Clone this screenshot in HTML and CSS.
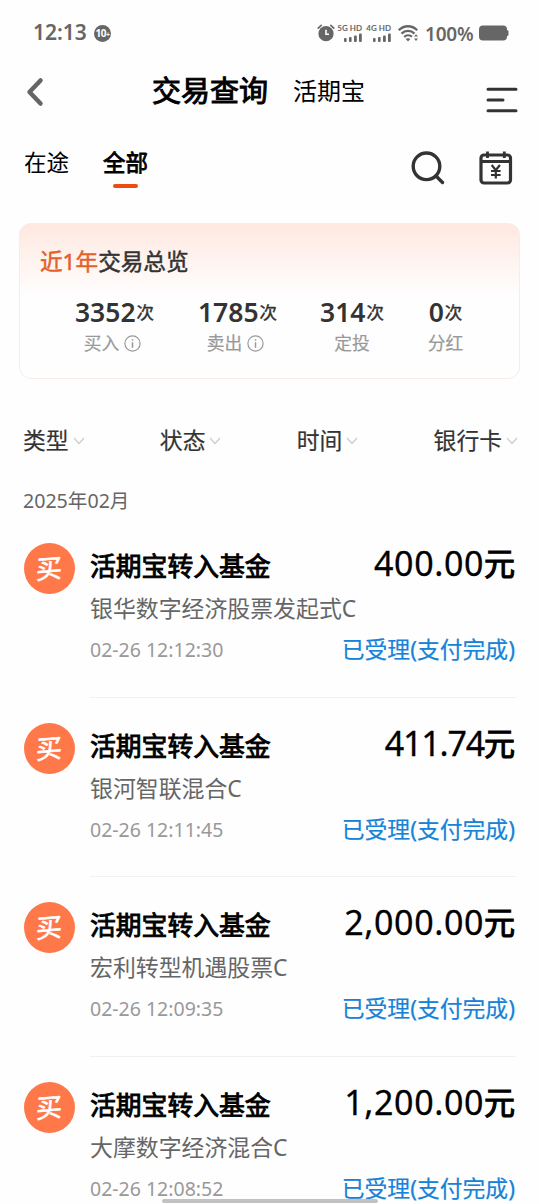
FILE: index.html
```html
<!DOCTYPE html>
<html lang="zh-CN">
<head>
    <meta charset="UTF-8">
    <meta name="viewport" content="width=device-width, initial-scale=1.0">
    <title>交易查询</title>
    <link rel="stylesheet" href="styles.css">
</head>
<body>
    <div class="status-bar">
        <span class="clock">12:13</span>
        <span class="badge">10<i>+</i></span>
        <div class="status-icons">
            <svg class="alarm" width="18" height="18" viewBox="0 0 18 18">
                <circle cx="9" cy="9.7" r="7.6" fill="#666"/>
                <path d="M1.2 4.2 4.2 1.4M16.8 4.2 13.8 1.4" stroke="#666" stroke-width="1.6" stroke-linecap="round"/>
                <path d="M9 5.8V10.2H12" fill="none" stroke="#fff" stroke-width="1.6"/>
            </svg>
            <div class="signal">
                <span>5G HD</span>
                <svg width="18" height="9" viewBox="0 0 18 9" fill="#666"><rect x="0" y="5" width="2.6" height="4" rx="1"/><rect x="5" y="4" width="2.6" height="5" rx="1"/><rect x="10" y="2.5" width="2.8" height="6.5" rx="1"/><rect x="15" y="0.5" width="2.8" height="8.5" rx="1"/></svg>
            </div>
            <div class="signal">
                <span>4G HD</span>
                <svg width="18" height="9" viewBox="0 0 18 9" fill="#666"><rect x="0" y="5" width="2.6" height="4" rx="1"/><rect x="5" y="4" width="2.6" height="5" rx="1"/><rect x="10" y="2.5" width="2.8" height="6.5" rx="1"/><rect x="15" y="0.5" width="2.8" height="8.5" rx="1"/></svg>
            </div>
            <svg class="wifi" width="21" height="17" viewBox="0 0 21 17" fill="none" stroke="#666" stroke-width="2.3">
                <path d="M.8 5.2C6-.1 14-.1 19.2 5.2M3.5 8.6C7.2 5 12.8 5 16.5 8.6M6.2 12C8.2 10 11.6 9.9 14 11.7"/>
                <path d="M7.5 13.8Q10 12.5 12.5 13.8L10 16.5Z" fill="#666" stroke="none"/>
                <path d="M16 11.6 18 9.3 20 11.6ZM16 13.5H20L18 15.9Z" fill="#666" stroke="none"/>
            </svg>
            <span class="percent">100%</span>
            <svg class="battery" width="30" height="16" viewBox="0 0 30 16" fill="#666"><rect x="0" y="0.5" width="28" height="15" rx="4"/><rect x="26" y="5" width="3.5" height="6" rx="1.5"/></svg>
        </div>
    </div>

    <div class="header">
        <svg class="back" width="20" height="30" viewBox="0 0 20 30"><path d="M16.5 3.5 5.5 15 16.5 26.5" fill="none" stroke="#666" stroke-width="4.5" stroke-linecap="round" stroke-linejoin="round"/></svg>
        <h1>交易查询</h1>
        <span class="sub-title">活期宝</span>
        <svg class="menu" width="32" height="26" viewBox="0 0 32 26"><path d="M2 2.3H30M2 13H17M2 23.7H30" stroke="#333" stroke-width="3" stroke-linecap="round"/></svg>
    </div>

    <div class="tabs">
        <span class="tab">在途</span>
        <span class="tab active">全部</span>
        <svg class="search" width="34" height="34" viewBox="0 0 34 34" fill="none" stroke="#333" stroke-width="3.4"><circle cx="15.5" cy="15.3" r="13.3"/><path d="M25 25 31.5 31.5" stroke-linecap="round"/></svg>
        <svg class="calendar" width="34" height="34" viewBox="0 0 34 34" fill="none" stroke="#333" stroke-width="3.2"><rect x="2" y="4" width="29.5" height="28" rx="3"/><path d="M2 10.5H31.5M8.5 .5V7M25.3 .5V7" stroke-width="2.8"/><path d="M12.7 14 16.8 19.2 20.9 14M12 20H21.6M12 24H21.6M16.8 19V27.5" stroke-width="2.2"/></svg>
    </div>

    <div class="overview">
        <h2><em>近1年</em>交易总览</h2>
        <div class="stats">
            <div class="stat">
                <div class="num">3352<small>次</small></div>
                <div class="label">买入<svg width="17" height="17" viewBox="0 0 17 17"><circle cx="8.5" cy="8.5" r="7.6" fill="none" stroke="#999" stroke-width="1.2"/><path d="M8.5 7.3V12.7M8.5 4.2V5.8" stroke="#999" stroke-width="1.5"/></svg></div>
            </div>
            <div class="stat">
                <div class="num">1785<small>次</small></div>
                <div class="label">卖出<svg width="17" height="17" viewBox="0 0 17 17"><circle cx="8.5" cy="8.5" r="7.6" fill="none" stroke="#999" stroke-width="1.2"/><path d="M8.5 7.3V12.7M8.5 4.2V5.8" stroke="#999" stroke-width="1.5"/></svg></div>
            </div>
            <div class="stat">
                <div class="num">314<small>次</small></div>
                <div class="label">定投</div>
            </div>
            <div class="stat">
                <div class="num">0<small>次</small></div>
                <div class="label">分红</div>
            </div>
        </div>
    </div>

    <div class="filters">
        <span>类型<svg width="12" height="8" viewBox="0 0 12 8"><path d="M1 1 6 6.5 11 1"/></svg></span>
        <span>状态<svg width="12" height="8" viewBox="0 0 12 8"><path d="M1 1 6 6.5 11 1"/></svg></span>
        <span>时间<svg width="12" height="8" viewBox="0 0 12 8"><path d="M1 1 6 6.5 11 1"/></svg></span>
        <span>银行卡<svg width="12" height="8" viewBox="0 0 12 8"><path d="M1 1 6 6.5 11 1"/></svg></span>
    </div>

    <div class="month">2025年02月</div>

    <div class="list">
        <div class="item">
            <div class="icon"><span>买</span></div>
            <div class="detail">
                <div class="row"><span class="name">活期宝转入基金</span><span class="amount">400.00<b>元</b></span></div>
                <div class="fund">银华数字经济股票发起式C</div>
                <div class="row"><span class="time">02-26 12:12:30</span><span class="state">已受理(支付完成)</span></div>
            </div>
        </div>
        <div class="item">
            <div class="icon"><span>买</span></div>
            <div class="detail">
                <div class="row"><span class="name">活期宝转入基金</span><span class="amount narrow">411.74<b>元</b></span></div>
                <div class="fund">银河智联混合C</div>
                <div class="row"><span class="time">02-26 12:11:45</span><span class="state">已受理(支付完成)</span></div>
            </div>
        </div>
        <div class="item">
            <div class="icon"><span>买</span></div>
            <div class="detail">
                <div class="row"><span class="name">活期宝转入基金</span><span class="amount">2,000.00<b>元</b></span></div>
                <div class="fund">宏利转型机遇股票C</div>
                <div class="row"><span class="time">02-26 12:09:35</span><span class="state">已受理(支付完成)</span></div>
            </div>
        </div>
        <div class="item">
            <div class="icon"><span>买</span></div>
            <div class="detail">
                <div class="row"><span class="name">活期宝转入基金</span><span class="amount">1,200.00<b>元</b></span></div>
                <div class="fund">大摩数字经济混合C</div>
                <div class="row"><span class="time">02-26 12:08:52</span><span class="state">已受理(支付完成)</span></div>
            </div>
        </div>
    </div>

    <div class="home-bar"></div>
</body>
</html>
```
FILE: styles.css
```css
* {
    box-sizing: border-box;
}
body {
    font-family: 'Noto Sans', 'Noto Sans CJK SC', sans-serif;
    margin: 0;
    height: 1204px;
    background: #fefefe;
    color: #333;
    overflow: hidden; /* Last item runs under the home bar */
}
svg {
    display: block;
    flex: none;
}
h1, h2 {
    margin: 0;
}

/* Status bar */
.status-bar {
    display: flex;
    align-items: center;
    height: 66px;
    padding: 0 31px 0 33px;
    color: #666;
}
.clock {
    width: 53px;
    font-size: 21px;
    font-weight: 600;
    line-height: 24px;
    padding-bottom: 2px;
}
.badge {
    width: 17px;
    height: 17px;
    margin-left: 8px;
    border-radius: 50%;
    background: #666;
    color: white;
    font-size: 10px;
    font-weight: bold;
    line-height: 17px;
    text-align: center;
    letter-spacing: -0.5px;
    white-space: nowrap;
}
.badge i {
    font-size: 7px;
    font-style: normal;
}
.status-icons {
    display: flex;
    align-items: center;
    margin-left: auto;
}
.alarm {
    margin-right: 3px;
}
.signal {
    display: flex;
    flex-direction: column;
    align-items: flex-end;
    width: 24px;
    margin-right: 5px;
    font-family: Lato, sans-serif;
    font-size: 8px;
    font-weight: bold;
    line-height: 8px;
    white-space: nowrap;
}
.signal svg {
    margin-top: 1px;
}
.wifi {
    margin-left: 2px;
}
.percent {
    width: 49px;
    margin: 0 5px 0 6px;
    font-size: 19px;
    font-weight: 600;
    line-height: 20px;
    padding-top: 2px;
    letter-spacing: -0.2px;
}

/* Header */
.header {
    display: flex;
    align-items: center;
    height: 50px;
    padding: 0 22px 0 24px;
}
.back {
    margin-top: 2px;
}
.header h1 {
    margin-left: 108px;
    font-size: 29px;
    font-weight: 400;
    line-height: 40px;
    color: #000;
    -webkit-text-stroke: 1px;
}
.sub-title {
    margin-left: 25px;
    font-size: 24px;
    line-height: 40px;
    color: #000;
}
.menu {
    margin: 17px 0 0 auto;
}

/* Tabs */
.tabs {
    display: flex;
    height: 107px;
    padding: 27px 27px 0 24px;
    font-size: 22.5px;
    line-height: 40px;
    color: #000;
}
.tab {
    margin-right: 34px;
}
.tab.active {
    -webkit-text-stroke: 0.8px;
}
.tab.active::after {
    content: "";
    display: block;
    width: 25px;
    height: 4px;
    margin: 1px auto 0;
    border-radius: 2px;
    background: #ea4c12;
}
.search {
    margin: 8px 1px 0 auto;
}
.calendar {
    margin: 8px 0 0 33px;
}

/* Overview card */
.overview {
    height: 156px;
    margin: 0 20px 0 19px;
    padding: 21px 0 0 20px;
    border: 1px solid #f7ece7;
    border-radius: 12px;
    background: linear-gradient(#ffe8e0, #fefefe 72px);
}
.overview h2 {
    font-size: 22.6px;
    font-weight: 400;
    line-height: 34px;
    -webkit-text-stroke: 0.5px;
}
.overview em {
    font-style: normal;
    color: #e4602a;
}
.stats {
    display: grid;
    grid-template-columns: 149px 97px 132px 55px;
    margin-top: 16px;
}
.stat {
    display: flex;
    flex-direction: column;
    align-items: center;
}
.num {
    font-size: 26.5px;
    font-weight: 600;
    line-height: 34px;
    white-space: nowrap;
}
.num small {
    margin-left: 1px;
    font-size: 17.5px;
    font-weight: 400;
    vertical-align: 3px;
    line-height: 1;
    -webkit-text-stroke: 0.4px;
}
.label {
    display: flex;
    align-items: center;
    gap: 5px;
    margin-left: -4px;
    font-size: 17.8px;
    line-height: 29px;
    color: #999;
    -webkit-text-stroke: 0.2px;
}
.stat:nth-child(n+3) .label {
    margin-left: 0;
}

/* Filters */
.filters {
    display: flex;
    justify-content: space-between;
    padding: 46px 22px 0 23px;
    font-size: 22.8px;
    line-height: 32px;
    -webkit-text-stroke: 0.2px;
}
.filters span {
    display: flex;
    align-items: center;
}
.filters svg {
    margin-left: 4px;
    fill: none;
    stroke: #ccc;
    stroke-width: 1.2;
}
.month {
    height: 61px;
    padding: 30px 23px 0;
    font-size: 19.6px;
    line-height: 28px;
    color: #666;
}

/* Transaction list */
.item {
    display: flex;
    height: 179.6px;
    padding: 25px 24px 0;
}
.icon {
    flex: none;
    display: flex;
    align-items: center;
    justify-content: center;
    width: 51px;
    height: 51px;
    border-radius: 50%;
    background: #ff784a;
    color: white;
    font-size: 26px;
    line-height: 49px;
    -webkit-text-stroke: 0.6px;
}
.icon span {
    transform: skewY(-5deg);
}
.detail {
    flex: 1;
    margin-left: 15px;
    border-bottom: 1px solid #f1f1f1;
}
.row {
    display: flex;
    justify-content: space-between;
    line-height: 44px;
    white-space: nowrap;
}
.name {
    padding-top: 1px;
    font-size: 25.8px;
    color: #000;
    -webkit-text-stroke: 0.9px;
}
.amount {
    height: 44px;
    margin-top: -2px;
    margin-right: 1px;
    font-size: 34px;
    letter-spacing: 0.6px;
    color: #000;
    -webkit-text-stroke: 0.3px;
}
.amount.narrow {
    letter-spacing: -1.2px;
}
.amount b {
    font-size: 31px;
    font-weight: 400;
    letter-spacing: 0;
    vertical-align: 1px;
    line-height: 1;
    -webkit-text-stroke: 1.1px;
}
.fund {
    font-size: 22.9px;
    line-height: 41px;
    color: #666;
}
.time {
    font-size: 19.5px;
    line-height: 42px;
    color: #999;
}
.state {
    margin-right: 1px;
    font-size: 22.8px;
    line-height: 42px;
    color: #1683d8;
    -webkit-text-stroke: 0.2px;
}

/* System gesture bar */
.home-bar {
    position: fixed;
    left: 162px;
    bottom: 1px;
    width: 216px;
    height: 4px;
    border-radius: 2px;
    background: #c2c2c2;
}
```
